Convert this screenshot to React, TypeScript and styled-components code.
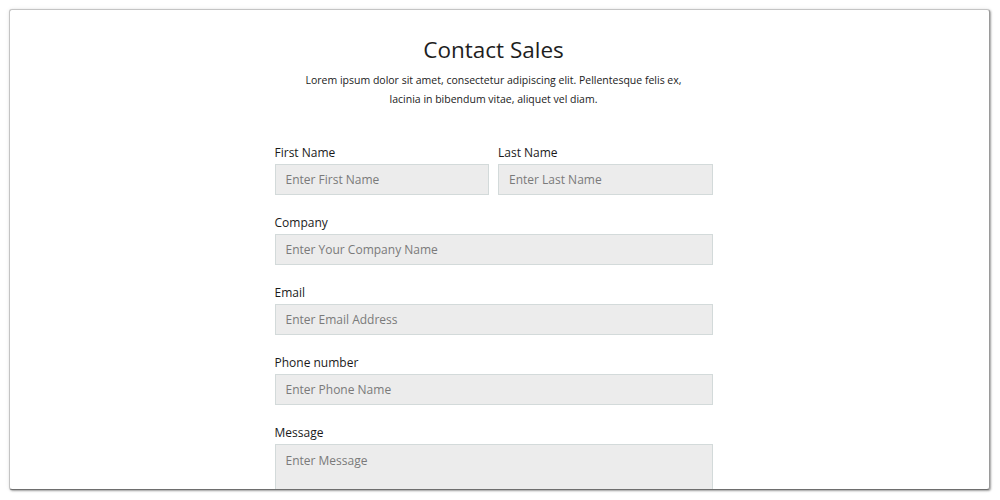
import React from "react";
import styled, { createGlobalStyle } from "styled-components";

const Global = createGlobalStyle`
  html, body { margin: 0; padding: 0; background: #fff; }
  body { font-family: "Open Sans", "Noto Sans", sans-serif; color: #222; }
  * { box-sizing: border-box; }
`;

const Page = styled.div`
  width: 1000px;
  height: 500px;
  padding: 9px 10px 9px 9px;
  background: #fff;
`;

const Card = styled.div`
  height: 481px;
  border: 1px solid #c4c4c4;
  border-right-color: #9a9a9a;
  border-bottom-color: #6e6e6e;
  border-radius: 3px;
  box-shadow: 1px 1px 2px rgba(0, 0, 0, 0.35), 0 0 4px rgba(0, 0, 0, 0.08);
  background: #fff;
  overflow: hidden;
  display: flex;
  justify-content: center;
  padding-right: 12px;
`;

const Inner = styled.div`
  width: 438px;
  display: flex;
  flex-direction: column;
  align-items: stretch;
`;

const Header = styled.header`
  display: flex;
  flex-direction: column;
  align-items: center;
  text-align: center;
  padding-top: 23px;
  margin: 0 -80px;
`;

const Title = styled.h1`
  margin: 0;
  font-size: 22.5px;
  font-weight: 400;
  color: #1e1e1e;
  line-height: 34px;
`;

const Lead = styled.p`
  margin: 4px 0 0;
  font-size: 10.5px;
  line-height: 19px;
  color: #222;
  width: 400px;
`;

const Form = styled.form`
  margin-top: 35px;
  display: flex;
  flex-direction: column;
  gap: 19px;
`;

const Row = styled.div`
  display: grid;
  grid-template-columns: 1fr 1fr;
  gap: 9px;
`;

const Field = styled.label`
  display: flex;
  flex-direction: column;
  gap: 3px;
`;

const LabelText = styled.span`
  font-size: 12px;
  font-weight: 500;
  color: #1a1a1a;
  line-height: 17px;
`;

const Input = styled.input`
  height: 31px;
  width: 100%;
  border: 1px solid #d3dada;
  background: #ececec;
  padding: 0 10px;
  font-family: inherit;
  font-size: 12px;
  color: #333;
  outline: none;
  &::placeholder { color: #7a7a7a; }
`;

const TextArea = styled.textarea`
  height: 80px;
  width: 100%;
  border: 1px solid #d3dada;
  background: #ececec;
  padding: 7px 10px;
  font-family: inherit;
  font-size: 12px;
  color: #333;
  resize: none;
  outline: none;
  &::placeholder { color: #7a7a7a; }
`;

export default function App() {
  return (
    <>
      <Global />
      <Page>
        <Card>
          <Inner>
            <Header>
              <Title>Contact Sales</Title>
              <Lead>
                Lorem ipsum dolor sit amet, consectetur adipiscing elit. Pellentesque felis ex,
                lacinia in bibendum vitae, aliquet vel diam.
              </Lead>
            </Header>
            <Form>
              <Row>
                <Field>
                  <LabelText>First Name</LabelText>
                  <Input placeholder="Enter First Name" />
                </Field>
                <Field>
                  <LabelText>Last Name</LabelText>
                  <Input placeholder="Enter Last Name" />
                </Field>
              </Row>
              <Field>
                <LabelText>Company</LabelText>
                <Input placeholder="Enter Your Company Name" />
              </Field>
              <Field>
                <LabelText>Email</LabelText>
                <Input placeholder="Enter Email Address" />
              </Field>
              <Field>
                <LabelText>Phone number</LabelText>
                <Input placeholder="Enter Phone Name" />
              </Field>
              <Field>
                <LabelText>Message</LabelText>
                <TextArea placeholder="Enter Message" />
              </Field>
            </Form>
          </Inner>
        </Card>
      </Page>
    </>
  );
}
